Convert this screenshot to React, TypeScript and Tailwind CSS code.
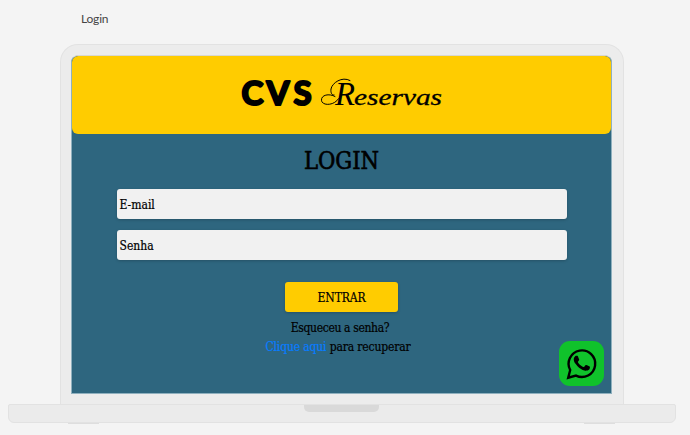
import React from "react";

const slab = "font-['DejaVu_Serif_Condensed','DejaVu_Serif',serif] [font-stretch:condensed]";

function Logo() {
  return (
    <svg width="206" height="40" viewBox="0 0 206 40" className="overflow-visible" aria-label="CVS Reservas">
      <text x="2.5 27.5 54.5" y="30" fontFamily="Lato, sans-serif" fontWeight="700" fontSize="33" stroke="#000" strokeWidth="2.2" strokeLinejoin="round" strokeLinecap="round">CVS</text>
      <path d="M111 5.5C103 1 93 8 92 14C91.5 18 93 20.5 95 20M99.5 23.7C95 31 83 31 82.5 25.3C82 20 90 18 96 21.5" fill="none" stroke="#000" strokeWidth="1" strokeLinecap="round" />
      <text x="96" y="29.5" fontFamily="'Liberation Serif', serif" fontStyle="italic" fontSize="34" textLength="20" lengthAdjust="spacingAndGlyphs">R</text>
      <text x="115" y="29.5" fontFamily="'Liberation Serif', serif" fontStyle="italic" fontSize="24" textLength="88" lengthAdjust="spacingAndGlyphs" stroke="#000" strokeWidth="0.3">eservas</text>
    </svg>
  );
}

function WhatsAppButton() {
  return (
    <button aria-label="WhatsApp" className="absolute right-[7px] bottom-[7px] flex size-[45px] items-center justify-center rounded-[11px] bg-[#10c22b]">
      <svg width="32" height="32" viewBox="0 0 32 32" className="overflow-visible">
        <path d="M4.2 22A13.3 13.3 0 1 1 10 27.6L2.2 29.7Z" fill="none" stroke="#000" strokeWidth="2.4" strokeLinejoin="miter" />
        <path transform="translate(-.3 -.9) scale(1.34)" d="M17.472 14.382c-.297-.149-1.758-.867-2.03-.967-.273-.099-.471-.148-.67.15-.197.297-.767.966-.94 1.164-.173.199-.347.223-.644.075-.297-.15-1.255-.463-2.39-1.475-.883-.788-1.48-1.761-1.653-2.059-.173-.297-.018-.458.13-.606.134-.133.298-.347.446-.52.149-.174.198-.298.298-.497.099-.198.05-.371-.025-.52-.075-.149-.669-1.612-.916-2.207-.242-.579-.487-.5-.669-.51-.173-.008-.371-.01-.57-.01-.198 0-.52.074-.792.372-.272.297-1.04 1.016-1.04 2.479 0 1.462 1.065 2.875 1.213 3.074.149.198 2.096 3.2 5.077 4.487.709.306 1.262.489 1.694.625.712.227 1.36.195 1.871.118.571-.085 1.758-.719 2.006-1.413.248-.694.248-1.289.173-1.413-.074-.124-.272-.198-.57-.347" />
      </svg>
    </button>
  );
}

function Field({ label }: { label: string }) {
  return (
    <div className="flex h-[30px] w-[450px] items-center rounded-[3px] bg-[#f1f1f1] pl-[3px] pt-px shadow-[0_1px_3px_rgba(0,0,0,0.2)]">
      <span className="text-[12px] text-black">{label}</span>
    </div>
  );
}

export default function App() {
  return (
    <div className="h-[435px] w-[690px] overflow-hidden bg-[#f4f4f4]">
      <div className="h-[44px] pt-[11px] pl-[81px] font-['Lato',sans-serif] text-[12px] leading-4 tracking-[-0.2px] text-[#444]">Login</div>
      <div className="ml-[60px] h-[360px] w-[564px] rounded-t-[18px] border border-b-0 border-[#e2e2e2] bg-[#ececec] pt-[10px] pl-[10px]">
        <div className={"relative flex h-[339px] w-[541px] flex-col items-center overflow-hidden rounded-t-[7px] border border-t-[#d8d8d0] border-x-[#8fb0be] border-b-[#8fb0be] bg-[#2e667f] [-webkit-text-stroke:0.2px] " + slab}>
          <header className="flex h-[78px] w-full shrink-0 justify-center rounded-[6px] bg-[#ffcc00] pt-[19px]">
            <Logo />
          </header>
          <h1 className="mt-[12px] h-[30px] text-[23.5px] leading-[30px] text-black [-webkit-text-stroke:0.6px]">LOGIN</h1>
          <div className="mt-[13px] flex flex-col gap-[11px]">
            <Field label="E-mail" />
            <Field label="Senha" />
          </div>
          <button className="mt-[22px] h-[30px] w-[113px] shrink-0 rounded-[3px] bg-[#ffcc00] pt-px text-[12px] tracking-[-0.1px] text-black shadow-[0_1px_3px_rgba(0,0,0,0.2)]">ENTRAR</button>
          <p className="mt-[7px] mr-[3px] text-[12px] leading-[19px] tracking-[-0.35px] text-black">Esqueceu a senha?</p>
          <p className="mr-[7px] text-[12px] leading-[19px] tracking-[-0.15px] text-black"><a className="text-[#087cff]">Clique aqui</a> para recuperar</p>
          <WhatsAppButton />
        </div>
      </div>
      <div className="ml-[8px] flex h-[19px] w-[668px] justify-center rounded-b-[6px] rounded-t-[2px] border border-[#e2e2e2] bg-[#ebebeb]">
        <div className="mr-[2px] h-[7px] w-[75px] rounded-b-[5px] bg-[#d9d9d9]" />
      </div>
      <div className="flex justify-between pr-[75px] pl-[68px]">
        <div className="h-px w-[31px] bg-[#dedede]" />
        <div className="h-px w-[31px] bg-[#dedede]" />
      </div>
    </div>
  );
}
